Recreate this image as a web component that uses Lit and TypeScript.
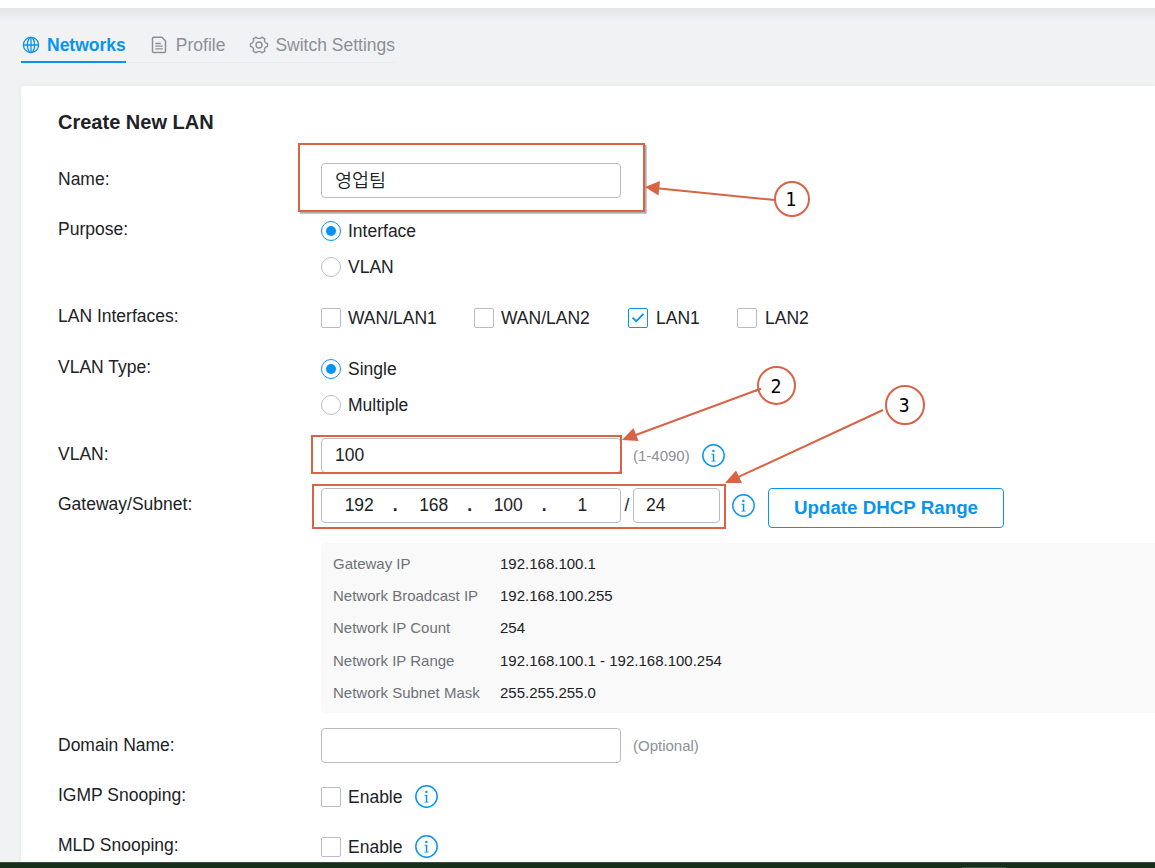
import { LitElement, html, css, svg } from "lit";
import { customElement, property } from "lit/decorators.js";
import { classMap } from "lit/directives/class-map.js";

@customElement("info-icon")
class InfoIcon extends LitElement {
  static styles = css`
    :host { display: block; width: 24px; height: 24px; flex: none; }
    svg { display: block; }
  `;
  render() {
    return html`<svg width="24" height="24" viewBox="0 0 24 24">
      <circle cx="11.5" cy="11.5" r="10.7" fill="none" stroke="#0794f0" stroke-width="1.5" />
      <circle cx="11.4" cy="6.9" r="1.2" fill="#0794f0" />
      <path d="M9.500 9.800h2.800v6.900h1.300v.9h-4.200v-.9h1.400v-6h-1.300z" fill="#0794f0" />
    </svg>`;
  }
}

@customElement("choice-item")
class ChoiceItem extends LitElement {
  @property() label = "";
  @property() kind = "check";
  @property({ type: Boolean }) on = false;
  static styles = css`
    :host { display: flex; align-items: center; height: 36px; gap: 7px; white-space: nowrap; }
    .box { box-sizing: border-box; width: 20px; height: 20px; border: 1px solid #b9bdc1; border-radius: 2px; background: #fff; display: grid; place-items: center; flex: none; }
    .radio { border-radius: 50%; }
    .on { border-color: #0794f0; }
    .dot { width: 10px; height: 10px; border-radius: 50%; background: #0794f0; margin-right: 1px; }
    .text { line-height: 20px; }
  `;
  render() {
    const mark = !this.on
      ? ""
      : this.kind === "radio"
        ? html`<span class="dot"></span>`
        : html`<svg width="14" height="12" viewBox="0 0 14 12"><path d="M1.500 5.600 5.300 9.200 12.500 1.900" fill="none" stroke="#0794f0" stroke-width="1.9" /></svg>`;
    return html`<span class=${classMap({ box: true, radio: this.kind === "radio", on: this.on })}>${mark}</span><span class="text">${this.label}</span>`;
  }
}

const globe = svg`<g fill="none" stroke="currentColor" stroke-width="1.3"><circle cx="10" cy="10" r="7.6"/><ellipse cx="10" cy="10" rx="3.6" ry="7.6"/><path d="M10 2.4v15.2M2.4 10h15.2"/></g>`;
const page = svg`<g fill="none" stroke="currentColor" stroke-width="1.5"><path d="M3.500 2.200H12l3.500 3.700v10.300a1.300 1.300 0 0 1-1.300 1.300H3.800a1.300 1.300 0 0 1-1.300-1.300V3.200a1 1 0 0 1 1-1z" stroke-linejoin="round"/><path d="M5.300 8.500h5.500M5.300 11.200h7.600M5.300 13.900h7.600" stroke-width="1.300"/></g>`;
const gear = svg`<g fill="none" stroke="currentColor" stroke-width="1.4" stroke-linejoin="round"><path d="M7.2 2.1 8.2 3.2Q10 4 11.8 3.2L12.8 2.1 15.8 3.9 15.4 5.5Q15.7 7.4 17.2 8.1L18.5 8.6V11.4L17.2 11.9Q15.7 12.7 15.4 14.5L15.8 16.1 12.8 17.9 11.8 16.8Q10 16 8.2 16.8L7.2 17.9 4.2 16.1 4.6 14.5Q4.3 12.7 2.8 11.9L1.5 11.4V8.6L2.8 8.1Q4.3 7.4 4.6 5.5L4.2 3.9z"/><circle cx="10" cy="10" r="3"/></g>`;

@customElement("app-root")
class AppRoot extends LitElement {
  static styles = css`
    :host { display: flex; flex-direction: column; position: relative; width: 1155px; height: 868px; overflow: hidden; background: #f1f2f4; color: #212226; font: 17.5px "Liberation Sans", Arial, sans-serif; }
    .strip { height: 8px; background: #fff; flex: none; }
    .top { height: 78px; flex: none; padding-left: 21px; display: flex; align-items: flex-start; background: linear-gradient(#e4e5ea, #f1f2f4 14px); }
    .tabs { display: flex; gap: 24px; height: 54px; border-bottom: 1px solid #e9eaec; }
    .tab { display: flex; align-items: center; height: 55px; box-sizing: border-box; gap: 6px; padding-top: 18px; color: #8c9095; white-space: nowrap; }
    .tab span { padding-top: 2px; }
    .active { color: #0794f0; font-weight: bold; border-bottom: 2px solid #0794f0; padding-top: 20px; }
    .card { box-sizing: border-box; margin-left: 21px; height: 776px; flex: none; overflow: hidden; background: #fff; border-radius: 4px 0 0 0; padding: 24px 0 0 37px; box-shadow: 0 0 6px rgba(0,0,0,.04); }
    h1 { margin: 0 0 29px; font-size: 20px; line-height: 24px; }
    .form { display: flex; flex-direction: column; gap: 15px; }
    .row { display: grid; grid-template-columns: 263px 1fr; align-items: start; }
    .low { height: 35px; }
    .label { line-height: 32px; }
    .low .label { line-height: 34px; }
    .line { display: flex; align-items: center; height: 35px; }
    .field { box-sizing: border-box; width: 300px; height: 35px; border: 1px solid #b9bdc1; border-radius: 4px; padding-left: 13px; line-height: 33px; }
    .korean { font-family: "Noto Sans CJK KR", sans-serif; font-size: 18.5px; font-weight: 350; line-height: 30px; }
    .ip { padding: 0; display: grid; grid-template-columns: repeat(4, 74.5px); text-align: center; }
    .octet { display: flex; justify-content: center; margin-left: -1px; }
    .octet::after { content: "."; font-weight: bold; width: 0; margin-right: -20px; margin-left: 19px; }
    .octet:last-child::after { content: none; }
    .slash { width: 12px; text-align: center; }
    .prefix { width: 87px; padding-left: 12px; }
    .hint { font-size: 15px; color: #8c9095; margin: 0 12px; }
    .after { margin: 0 12px; }
    .button { box-sizing: border-box; width: 236px; height: 40px; align-self: flex-start; flex: none; border: 1px solid #0794f0; border-radius: 4px; color: #0794f0; font-size: 18.75px; font-weight: bold; line-height: 37px; text-align: center; }
    .summary { margin-top: 20px; box-sizing: border-box; height: 170px; background: #f9f9f9; border-radius: 4px 0 0 4px; padding: 4.8px 12px; font-size: 15px; display: grid; grid-template-columns: 167px 1fr; grid-auto-rows: 32.25px; line-height: 32px; color: #212226; }
    .key { color: #6d7278; }
    .checks { display: flex; }
    .c1 { width: 153px; } .c2 { width: 154px; } .c3 { width: 109px; }
    .c3, .c4 { gap: 8px; }
    .enable { display: flex; align-items: center; gap: 12px; height: 38px; }
    .enable info-icon { margin-top: -1px; }
    .dock { height: 6px; flex: none; box-sizing: border-box; background: #15301a; border-top: 1px solid #3b4d3d; display: flex; align-items: flex-end; }
    .handle { margin-left: 962px; width: 44px; height: 1px; background: #3b503e; }
    .marks { position: absolute; left: 0; top: 0; pointer-events: none; }
    .num { font: 19.5px "DejaVu Sans Condensed", "DejaVu Sans", sans-serif; font-stretch: condensed; text-anchor: middle; fill: #000; }
  `;

  row(label: string, content: unknown, low = false) {
    return html`<div class=${classMap({ row: true, low })}><div class="label">${label}</div><div>${content}</div></div>`;
  }

  render() {
    const summary = [
      ["Gateway IP", "192.168.100.1"],
      ["Network Broadcast IP", "192.168.100.255"],
      ["Network IP Count", "254"],
      ["Network IP Range", "192.168.100.1 - 192.168.100.254"],
      ["Network Subnet Mask", "255.255.255.0"],
    ];
    const enable = html`<div class="enable"><choice-item label="Enable"></choice-item><info-icon></info-icon></div>`;
    return html`
      <div class="strip"></div>
      <div class="top"><div class="tabs">
        <div class="tab active"><svg width="20" height="20">${globe}</svg><span>Networks</span></div>
        <div class="tab"><svg width="20" height="20">${page}</svg><span>Profile</span></div>
        <div class="tab"><svg width="20" height="20">${gear}</svg><span>Switch Settings</span></div>
      </div></div>
      <div class="card">
        <h1>Create New LAN</h1>
        <div class="form">
          ${this.row("Name:", html`<div class="field korean">영업팀</div>`)}
          ${this.row("Purpose:", html`<choice-item kind="radio" on label="Interface"></choice-item><choice-item kind="radio" label="VLAN"></choice-item>`)}
          ${this.row("LAN Interfaces:", html`<div class="checks"><choice-item class="c1" label="WAN/LAN1"></choice-item><choice-item class="c2" label="WAN/LAN2"></choice-item><choice-item class="c3" on label="LAN1"></choice-item><choice-item class="c4" label="LAN2"></choice-item></div>`)}
          ${this.row("VLAN Type:", html`<choice-item kind="radio" on label="Single"></choice-item><choice-item kind="radio" label="Multiple"></choice-item>`)}
          ${this.row("VLAN:", html`<div class="line"><div class="field">100</div><span class="hint">(1-4090)</span><info-icon></info-icon></div>`)}
          ${this.row("Gateway/Subnet:", html`
            <div class="line">
              <div class="field ip">${["192", "168", "100", "1"].map((n) => html`<span class="octet">${n}</span>`)}</div>
              <span class="slash">/</span><div class="field prefix">24</div>
              <info-icon class="after"></info-icon><div class="button">Update DHCP Range</div>
            </div>
            <div class="summary">${summary.map(([k, v]) => html`<span class="key">${k}</span><span>${v}</span>`)}</div>`)}
          ${this.row("Domain Name:", html`<div class="line"><div class="field"></div><span class="hint">(Optional)</span></div>`, true)}
          ${this.row("IGMP Snooping:", enable, true)}
          ${this.row("MLD Snooping:", enable, true)}
        </div>
      </div>
      <div class="dock"><div class="handle"></div></div>
      <svg class="marks" width="1155" height="868">
        <path d="M300 212.700H645.700V145" fill="none" stroke="#8f8f8f" stroke-opacity=".7" stroke-width="2"/>
        <g fill="none" stroke="#d96345" stroke-width="2">
          <rect x="299" y="144" width="345" height="67"/>
          <rect x="312" y="436" width="309" height="37"/>
          <rect x="313" y="485" width="412" height="43"/>
          <path d="M657 188.300 775 200M635 435.300 760 389M738 477.200 883 410"/>
        </g>
        <g fill="#d96345"><path d="M645 187 660 181 658.500 195.500z"/><path d="M622 440 633.500 428 638.500 441z"/><path d="M725 483 736 470.500 742 483z"/></g>
        <g fill="#fff" stroke="#d96345" stroke-width="2">
          <circle cx="792" cy="199" r="17"/><circle cx="776.500" cy="385.500" r="18.500"/><circle cx="905" cy="405" r="19"/>
        </g>
        <path d="M755 391 761 388.700" stroke="#d96345" stroke-width="2"/>
        <text class="num" x="791" y="206">1</text><text class="num" x="776" y="392.500">2</text><text class="num" x="904" y="412">3</text>
      </svg>`;
  }
}
